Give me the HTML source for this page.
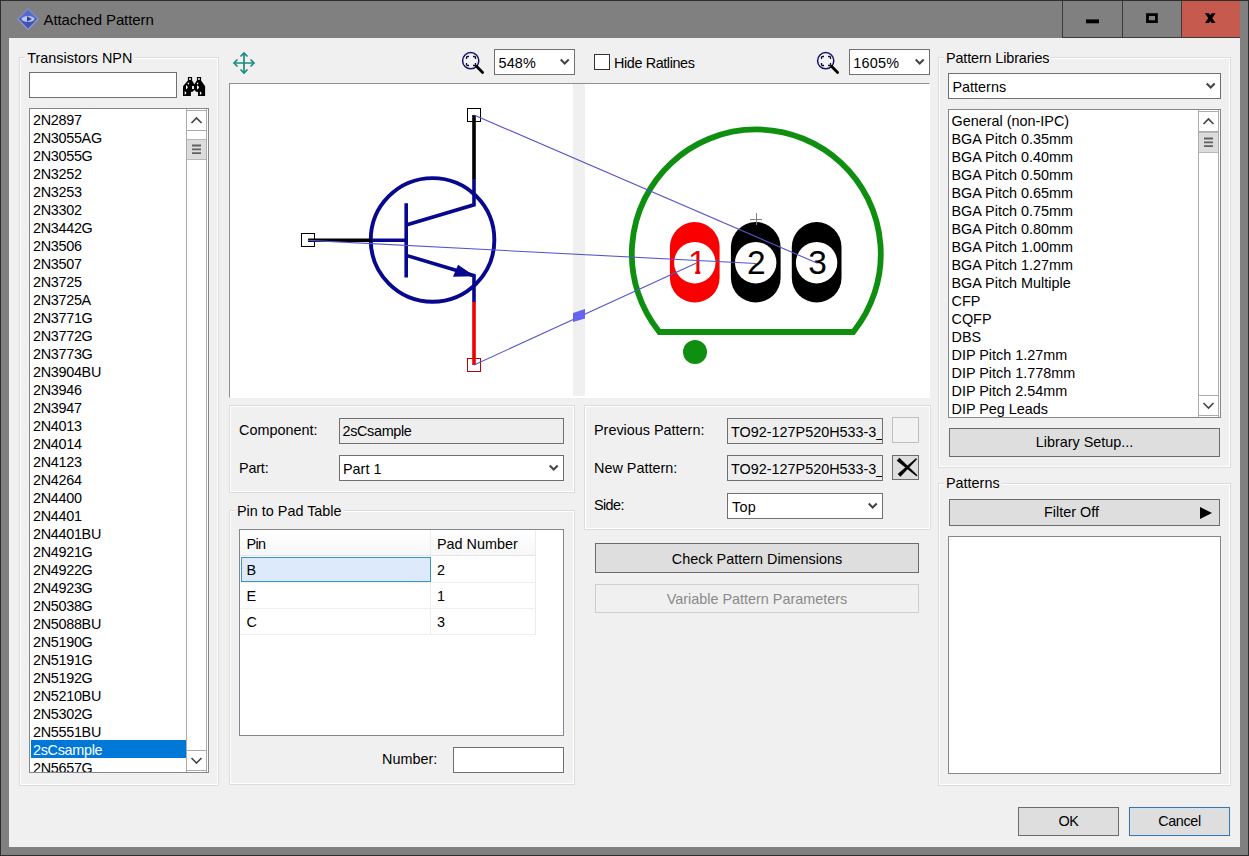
<!DOCTYPE html>
<html lang="en"><head><meta charset="utf-8"><title>Attached Pattern</title>
<style>
html,body{margin:0;padding:0}
body{width:1249px;height:856px;position:relative;overflow:hidden;background:#808080;font:14.4px/18px "Liberation Sans",sans-serif;color:#000}
div,span,svg{position:absolute;box-sizing:border-box}
.t{white-space:pre;height:18px;line-height:18px}
#frame{left:0;top:0;width:1249px;height:856px;border:1px solid #2e2e2e}
#content{left:9px;top:38px;width:1231px;height:809px;background:#f0f0f0}
.tb{top:1px;height:37px;border-left:1px solid #3a3a3a;border-bottom:1px solid #3a3a3a}
.gb{border:1px solid #dcdcdc;box-shadow:inset 0 0 0 1px #fff}
.gl{background:#f0f0f0;padding:0 2px;white-space:pre;height:18px;line-height:18px}
.in{background:#fff;border:1px solid #707070}
.ro{background:#eeeeee;border:1px solid #707070;overflow:hidden}
.btn{background:#dedede;border:1px solid #6c6c6c;text-align:center;white-space:pre}
.list{background:#fff;border:1px solid #828790;overflow:hidden}
.li{position:relative;height:18px;line-height:20px;overflow:hidden;white-space:pre;padding-left:3px}
.ll .li{padding-left:2px;letter-spacing:-0.3px}
.li.sel{background:#0078d7;color:#fff}
.sb{background:#fff;border-left:1px solid #ababab;border-right:1px solid #ababab}
.sbb{background:#fff;border-top:1px solid #ababab;border-bottom:1px solid #ababab}
.thumb{background:#dcdcdc;border-top:1px solid #b8b8b8;border-bottom:1px solid #b8b8b8}
.chev{fill:none;stroke:#444;stroke-width:1.6}

</style></head>
<body>
<div id="frame"></div>
<!-- title bar -->
<svg style="left:16px;top:8px" width="24" height="23" viewBox="0 0 24 23"><path d="M12 1 L22 11 L12 21.5 L2 11 Z" fill="#3f52b5" stroke="#8f9bd6" stroke-width="1.2"/><path d="M12 1 L22 11 L2 11 Z" fill="#5c70d0" opacity=".8"/><ellipse cx="12" cy="11" rx="6.5" ry="3" fill="#b9c6f5"/><path d="M11 8.3 L16 11 L11 13.7 Z" fill="#35408f"/></svg>
<div class="t" style="left:43.5px;top:10.5px;font-size:15px;letter-spacing:-0.1px">Attached Pattern</div>
<div class="tb" style="left:1062px;width:60px"></div>
<div class="tb" style="left:1122px;width:59px"></div>
<div class="tb" style="left:1181px;width:59px;background:#c75a4e"></div>
<svg style="left:1062px;top:0px" width="178" height="38" viewBox="1062 0 178 38"><rect x="1086" y="19.400" width="13" height="3.900" fill="#000"/><rect x="1147.500" y="14.600" width="8.900" height="7" fill="none" stroke="#000" stroke-width="2.800"/><clipPath id="cx"><rect x="1200" y="13.300" width="20" height="9.700"/></clipPath><path d="M1206.100 12L1214.400 24.300M1214.400 12L1206.100 24.300" stroke="#000" stroke-width="3.300" fill="none" clip-path="url(#cx)"/></svg>
<div id="content"></div>

<!-- left group -->
<div class="gb" style="left:19px;top:57px;width:200px;height:729px"></div>
<div class="gl" style="left:25.300px;top:49px">Transistors NPN</div>
<div class="in" style="left:29px;top:72px;width:148px;height:26px"></div>
<svg style="left:183px;top:77px" width="23" height="20" viewBox="0 0 23 20"><path d="M4.9 0.1L9.1 0.1L9.1 3.6L11.35 7.3L13.9 3.6L13.9 0.1L18.1 0.1L18.1 3.6L22.1 9.2L22.1 18.9L15 18.9L15 15L13.1 14.7L11.35 13.1L9.6 14.7L7.9 15L7.9 18.9L0 18.9L0 9.2L4.9 3.6Z" fill="#000"/><path d="M6 1.2H8V2.8H6ZM14.9 1.2H16.9V2.8H14.9ZM4.7 5.8H6.1V7.2H4.7ZM13.9 5.8H15.2V7.2H13.9ZM9.1 9.1H10.9V11.9H9.1ZM3 8L4.600 9.500V11L3 12.400ZM14 8.300L15.900 9.800V11L14 12.400ZM1.700 14L3.600 16L1.700 18ZM16.900 14.300L18.800 16.200L16.900 18Z" fill="#fff"/></svg>
<div class="list ll" style="left:29px;top:108px;width:180px;height:665px"><div style="left:1px;top:1px;width:155px;height:663px"><div class="li">2N2897</div><div class="li">2N3055AG</div><div class="li">2N3055G</div><div class="li">2N3252</div><div class="li">2N3253</div><div class="li">2N3302</div><div class="li">2N3442G</div><div class="li">2N3506</div><div class="li">2N3507</div><div class="li">2N3725</div><div class="li">2N3725A</div><div class="li">2N3771G</div><div class="li">2N3772G</div><div class="li">2N3773G</div><div class="li">2N3904BU</div><div class="li">2N3946</div><div class="li">2N3947</div><div class="li">2N4013</div><div class="li">2N4014</div><div class="li">2N4123</div><div class="li">2N4264</div><div class="li">2N4400</div><div class="li">2N4401</div><div class="li">2N4401BU</div><div class="li">2N4921G</div><div class="li">2N4922G</div><div class="li">2N4923G</div><div class="li">2N5038G</div><div class="li">2N5088BU</div><div class="li">2N5190G</div><div class="li">2N5191G</div><div class="li">2N5192G</div><div class="li">2N5210BU</div><div class="li">2N5302G</div><div class="li">2N5551BU</div><div class="li sel">2sCsample</div><div class="li">2N5657G</div></div>
<div class="sb" style="left:156px;top:0;width:21px;height:663px"></div>
<div class="sbb" style="left:157px;top:1px;width:19px;height:21px"></div>
<div class="thumb" style="left:157px;top:30px;width:19px;height:21px"></div>
<div class="sbb" style="left:157px;top:641px;width:19px;height:21px"></div>
<svg style="left:156px;top:1px" width="21" height="662" viewBox="0 0 21 662"><path class="chev" d="M5.500 13 L10.500 8 L15.500 13"/><path class="chev" d="M5.500 648 L10.500 653 L15.500 648"/><path d="M6 35.500h9M6 39.300h9M6 43.100h9" stroke="#606060" stroke-width="1.8"/></svg>
</div>

<!-- toolbar -->
<svg style="left:232px;top:51px" width="24" height="24" viewBox="0 0 24 24"><g fill="none" stroke="#1b8a83" stroke-width="1.7"><path d="M12 2v20M2 12h20"/><path d="M8.500 5.500L12 2l3.500 3.500M8.500 18.500L12 22l3.500-3.500M5.500 8.500L2 12l3.500 3.500M18.500 8.500L22 12l-3.500 3.500"/></g></svg>
<svg class="zi" style="left:461px;top:51px" width="25" height="24" viewBox="0 0 25 24"><circle cx="9.700" cy="9.700" r="8.100" fill="#f2f2fa" stroke="#14146e" stroke-width="1.5"/><path d="M15.500 15.300L21.600 21.400" stroke="#000" stroke-width="2.800" stroke-linecap="round"/><path d="M5.500 8V6.500Q5.500 5.500 6.500 5.500H8M12 5.500h1.500Q14.500 5.500 14.500 6.500V8M14.500 12v1.500Q14.500 14.500 13.500 14.500H12M8 14.500H6.500Q5.500 14.500 5.500 13.500V12" stroke="#111" stroke-width="1.300" fill="none"/></svg>
<div class="in" style="left:494px;top:49px;width:81px;height:26px"></div>
<div class="t" style="left:498.500px;top:54px;letter-spacing:0.17px">548%</div>
<div class="in" style="left:594px;top:54px;width:16px;height:16px;border-color:#333"></div>
<div class="t" style="left:614px;top:54px;letter-spacing:-0.39px">Hide Ratlines</div>
<svg class="zi" style="left:816px;top:51px" width="25" height="24" viewBox="0 0 25 24"><circle cx="9.700" cy="9.700" r="8.100" fill="#f2f2fa" stroke="#14146e" stroke-width="1.5"/><path d="M15.500 15.300L21.600 21.400" stroke="#000" stroke-width="2.800" stroke-linecap="round"/><path d="M5.500 8V6.500Q5.500 5.500 6.500 5.500H8M12 5.500h1.500Q14.500 5.500 14.500 6.500V8M14.500 12v1.500Q14.500 14.500 13.500 14.500H12M8 14.500H6.500Q5.500 14.500 5.500 13.500V12" stroke="#111" stroke-width="1.300" fill="none"/></svg>
<div class="in" style="left:849px;top:49px;width:81px;height:26px"></div>
<div class="t" style="left:853.300px;top:54px;letter-spacing:0.25px">1605%</div>

<!-- canvas -->
<div style="left:229px;top:83px;width:701px;height:315px;background:#fff;border:1px solid #8e8e8e;border-right-color:#fff;border-bottom-color:#fff"></div>
<div style="left:573px;top:84px;width:12px;height:312px;background:#f0f0f0"></div>
<svg style="left:0;top:0" width="1249" height="856" viewBox="0 0 1249 856">
<g id="sch" fill="none">
<circle cx="432.55" cy="239.9" r="61.8" stroke="#08088f" stroke-width="3.9"/>
<path d="M474 178.500V204.800L406.200 225M406.200 203.200V277.600M371 240.200H406.200M406.200 255.400L474 275.700V302" stroke="#08088f" stroke-width="3.6"/>
<path d="M475 276.300L453 276.800L458 264.800Z" fill="#08088f" stroke="none"/>
<path d="M474 115V179M308 240.200H371.500" stroke="#000" stroke-width="3.6"/>
<path d="M474 301.800V365" stroke="#f00000" stroke-width="3.6"/>
<rect x="467.500" y="108.500" width="13" height="13" stroke="#000" stroke-width="1"/>
<rect x="301.500" y="233.500" width="13" height="13" stroke="#000" stroke-width="1"/>
<rect x="467.500" y="358.500" width="13" height="13" stroke="#c00000" stroke-width="1"/>
</g>
<g id="pat">
<path d="M659.3 332 A124.5 124.5 0 1 1 853.3 332 Z" fill="none" stroke="#0f8f0f" stroke-width="5.800" stroke-linejoin="miter"/>
<circle cx="695" cy="352" r="12" fill="#0f8f0f"/>
<rect x="669.900" y="222.100" width="49.700" height="80.400" rx="24.850" fill="#fa0000"/>
<rect x="730.900" y="222.100" width="49.700" height="80.400" rx="24.850" fill="#000"/>
<rect x="791.800" y="222.100" width="49.700" height="80.400" rx="24.850" fill="#000"/>
<circle cx="694.800" cy="262.700" r="20.700" fill="#fff"/>
<circle cx="755.700" cy="262.700" r="20.700" fill="#fff"/>
<circle cx="816.600" cy="262.700" r="20.700" fill="#fff"/>
<path d="M756.500 213v12M750 219.500h12" stroke="#808080" stroke-width="1" fill="none"/>
<clipPath id="c1"><path d="M680 245H712V271H700.300V276H695.200V271H680Z"/></clipPath><text x="697.200" y="274" font-family="Liberation Sans, sans-serif" font-size="33.5" text-anchor="middle" fill="#e80000" clip-path="url(#c1)">1</text>
<text x="756.300" y="274" font-family="Liberation Sans, sans-serif" font-size="33.5" text-anchor="middle" fill="#000">2</text>
<text x="817.600" y="274" font-family="Liberation Sans, sans-serif" font-size="33.5" text-anchor="middle" fill="#000">3</text>
</g>
<g id="rat" stroke="#5555cc" stroke-width="1.1" fill="none">
<path d="M474 115L817.500 263.300"/>
<path d="M308 240.400L756 263.500"/>
<path d="M474 365L696 263.300"/>
<path d="M573 313L585 309V318.500L573 322Z" fill="#6464f0" stroke="none"/>
</g>
</svg>

<!-- component group -->
<div class="gb" style="left:229px;top:405px;width:346px;height:88px"></div>
<div class="t" style="left:239px;top:421px">Component:</div>
<div class="ro" style="left:339px;top:418px;width:225px;height:26px"></div>
<div class="t" style="left:342.500px;top:422px;letter-spacing:-0.33px">2sCsample</div>
<div class="t" style="left:239px;top:458.500px;letter-spacing:-0.18px">Part:</div>
<div class="in" style="left:339px;top:455px;width:225px;height:26px"></div>
<div class="t" style="left:343px;top:459.500px">Part 1</div>

<!-- pin to pad -->
<div class="gb" style="left:229px;top:510px;width:346px;height:275px"></div>
<div class="gl" style="left:235px;top:501.600px">Pin to Pad Table</div>
<div class="in" style="left:239px;top:529px;width:325px;height:207px;border-color:#828790"></div>
<div style="left:240px;top:530px;width:296px;height:26px;background:linear-gradient(#fff,#f7f7f7);border-bottom:1px solid #e5e5e5"></div>
<div style="left:430px;top:530px;width:1px;height:105px;background:#ececec"></div>
<div style="left:535px;top:530px;width:1px;height:105px;background:#ececec"></div>
<div style="left:240px;top:582px;width:296px;height:1px;background:#efefef"></div>
<div style="left:240px;top:608px;width:296px;height:1px;background:#efefef"></div>
<div style="left:240px;top:634px;width:296px;height:1px;background:#efefef"></div>
<div style="left:241px;top:557px;width:190px;height:25px;background:#dceafb;border:1px solid #3d93cc"></div>
<div class="t" style="left:246.500px;top:535px;letter-spacing:-0.6px">Pin</div>
<div class="t" style="left:437px;top:535px">Pad Number</div>
<div class="t" style="left:246.500px;top:561px">B</div>
<div class="t" style="left:437px;top:561px">2</div>
<div class="t" style="left:246.500px;top:587px">E</div>
<div class="t" style="left:437px;top:587px">1</div>
<div class="t" style="left:246.500px;top:613px">C</div>
<div class="t" style="left:437px;top:613px">3</div>
<div class="t" style="left:382px;top:750px">Number:</div>
<div class="in" style="left:453px;top:747px;width:111px;height:26px"></div>

<!-- pattern group -->
<div class="gb" style="left:584px;top:405px;width:347px;height:125px"></div>
<div class="t" style="left:594px;top:421px">Previous Pattern:</div>
<div class="ro" style="left:727px;top:418px;width:156px;height:26px"><div class="t" style="left:3px;top:3.500px">TO92-127P520H533-3_</div></div>
<div style="left:892px;top:417px;width:27px;height:26px;background:#f2f2f2;border:1px solid #bfbfbf"></div>
<div class="t" style="left:594px;top:459px">New Pattern:</div>
<div class="ro" style="left:727px;top:455px;width:156px;height:26px"><div class="t" style="left:3px;top:3.500px">TO92-127P520H533-3_</div></div>
<div class="btn" style="left:892px;top:455px;width:27px;height:25px"></div>
<svg style="left:892px;top:455px" width="27" height="25" viewBox="0 0 27 25"><path d="M5.08 5.68L24.47 20.98L25.13 20.22L7.32 3.12ZM8.37 21.43L24.74 4.26L24.06 3.54L6.03 18.97Z" fill="#000" stroke="#000" stroke-width="0.6" stroke-linejoin="round"/></svg>
<div class="t" style="left:594px;top:496px;letter-spacing:-0.6px">Side:</div>
<div class="in" style="left:727px;top:493px;width:156px;height:26px"></div>
<div class="t" style="left:732px;top:498px;letter-spacing:0.27px">Top</div>
<div class="btn" style="left:595px;top:543px;width:324px;height:30px;line-height:30.500px">Check Pattern Dimensions</div>
<div class="btn" style="left:595px;top:584px;width:324px;height:29px;line-height:28px;background:#f0f0f0;border-color:#cfcfcf;color:#8a8a8a">Variable Pattern Parameters</div>

<!-- right column -->
<div class="gb" style="left:938px;top:57px;width:293px;height:411px"></div>
<div class="gl" style="left:944px;top:49px;letter-spacing:-0.13px">Pattern Libraries</div>
<div class="in" style="left:948px;top:73px;width:273px;height:26px"></div>
<div class="t" style="left:952.500px;top:78px">Patterns</div>
<div class="list" style="left:948px;top:109px;width:273px;height:309px"><div style="left:-0.5px;top:1px;width:248px;height:306px"><div class="li">General (non-IPC)</div><div class="li">BGA Pitch 0.35mm</div><div class="li">BGA Pitch 0.40mm</div><div class="li">BGA Pitch 0.50mm</div><div class="li">BGA Pitch 0.65mm</div><div class="li">BGA Pitch 0.75mm</div><div class="li">BGA Pitch 0.80mm</div><div class="li">BGA Pitch 1.00mm</div><div class="li">BGA Pitch 1.27mm</div><div class="li">BGA Pitch Multiple</div><div class="li">CFP</div><div class="li">CQFP</div><div class="li">DBS</div><div class="li">DIP Pitch 1.27mm</div><div class="li">DIP Pitch 1.778mm</div><div class="li">DIP Pitch 2.54mm</div><div class="li">DIP Peg Leads</div></div>
<div class="sb" style="left:249px;top:0;width:21px;height:307px"></div>
<div class="sbb" style="left:250px;top:1px;width:19px;height:21px"></div>
<div class="thumb" style="left:250px;top:22px;width:19px;height:21px"></div>
<div class="sbb" style="left:250px;top:285px;width:19px;height:21px"></div>
<svg style="left:249px;top:1px" width="21" height="306" viewBox="0 0 21 306"><path class="chev" d="M5.500 13 L10.500 8 L15.500 13"/><path class="chev" d="M5.500 292 L10.500 297 L15.500 292"/><path d="M6 27.500h9M6 31.300h9M6 35.100h9" stroke="#606060" stroke-width="1.8"/></svg>
</div>
<div class="btn" style="left:949px;top:428px;width:271px;height:29px;line-height:27px">Library Setup...</div>

<div class="gb" style="left:938px;top:483px;width:293px;height:303px"></div>
<div class="gl" style="left:944px;top:474px">Patterns</div>
<div class="btn" style="left:949px;top:499px;width:271px;height:27px;line-height:25px;padding-right:26px">Filter Off</div>
<svg style="left:1199px;top:506px" width="14" height="14" viewBox="0 0 14 14"><path d="M1 1L13 7L1 13Z" fill="#000"/></svg>
<div class="in" style="left:948px;top:536px;width:273px;height:238px;border-color:#828790"></div>

<div class="btn" style="left:1018px;top:807px;width:101px;height:29px;line-height:27px;letter-spacing:-0.35px">OK</div>
<div class="btn" style="left:1129px;top:807px;width:101px;height:29px;line-height:27px;border-color:#3e75a6;box-shadow:inset 0 0 0 1px #d3e4f1, 0 0 1px #bcd9ee;letter-spacing:-0.38px">Cancel</div>
<!-- combo chevrons -->
<svg style="left:559px;top:58.2px" width="12" height="8" viewBox="0 0 12 8"><path class="chev" d="M1.700 1.500L5.700 5.500L9.700 1.500" style="stroke-width:2"/></svg>
<svg style="left:914px;top:58.2px" width="12" height="8" viewBox="0 0 12 8"><path class="chev" d="M1.700 1.500L5.700 5.500L9.700 1.500" style="stroke-width:2"/></svg>
<svg style="left:548px;top:464.2px" width="12" height="8" viewBox="0 0 12 8"><path class="chev" d="M1.700 1.500L5.700 5.500L9.700 1.500" style="stroke-width:2"/></svg>
<svg style="left:867px;top:502.2px" width="12" height="8" viewBox="0 0 12 8"><path class="chev" d="M1.700 1.500L5.700 5.500L9.700 1.500" style="stroke-width:2"/></svg>
<svg style="left:1205px;top:82.2px" width="12" height="8" viewBox="0 0 12 8"><path class="chev" d="M1.700 1.500L5.700 5.500L9.700 1.500" style="stroke-width:2"/></svg>

</body></html>
